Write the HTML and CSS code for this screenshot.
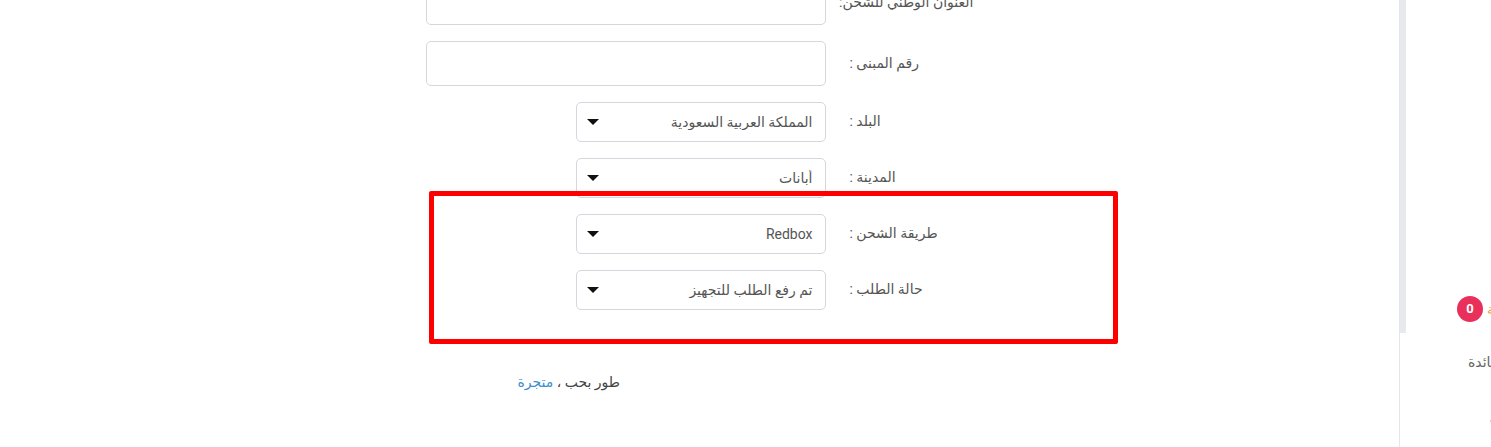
FILE: index.html
```html
<!DOCTYPE html>
<html lang="ar" dir="rtl">
<head>
  <meta charset="UTF-8">
  <title>تفاصيل الطلب</title>
  <link rel="stylesheet" href="styles.css">
</head>
<body>
  <aside class="sidebar">
    <div class="side-scroll"></div>
    <nav class="side-menu">
      <a class="side-item cart" href="#"><span class="badge">0</span><span class="side-text">السلة</span></a>
      <a class="side-item fav" href="#"><span class="side-text">الفائدة</span></a>
      <a class="side-item more" href="#"><span class="side-text">،</span></a>
    </nav>
  </aside>

  <main class="main">
    <form class="order-form">
      <div class="row">
        <label class="label">العنوان الوطني للشحن:</label>
        <input class="field field-wide" type="text">
      </div>
      <div class="row">
        <label class="label">رقم المبنى :</label>
        <input class="field field-wide" type="text">
      </div>
      <div class="row">
        <label class="label">البلد :</label>
        <div class="select-wrap">
          <select class="field">
            <option>المملكة العربية السعودية</option>
          </select>
        </div>
      </div>
      <div class="row">
        <label class="label">المدينة :</label>
        <div class="select-wrap">
          <select class="field">
            <option>أبانات</option>
          </select>
        </div>
      </div>
      <div class="row">
        <label class="label">طريقة الشحن :</label>
        <div class="select-wrap">
          <select class="field">
            <option>Redbox</option>
          </select>
        </div>
      </div>
      <div class="row">
        <label class="label">حالة الطلب :</label>
        <div class="select-wrap">
          <select class="field">
            <option>تم رفع الطلب للتجهيز</option>
          </select>
        </div>
      </div>

      <div class="highlight"></div>
    </form>

    <footer class="footer">طور بحب ، <a href="#">متجرة</a></footer>
  </main>
</body>
</html>
```

FILE: styles.css
```css
body {
  margin: 0;
  display: flex;
  font-family: Roboto, "DejaVu Sans", sans-serif;
  color: #555;
  background: #fff;
  overflow: hidden;
}
.main {
  flex: 1;
}
.order-form {
  position: relative;
  width: 548px;
  margin: -20px auto 0;
}
.row {
  display: flex;
  align-items: center;
  gap: 24px;
  margin-bottom: 16px;
}
.label {
  width: 124px;
  text-align: left;
  font-size: 14px;
  line-height: 16px;
  margin-top: -2px;
  color: #555;
  white-space: nowrap;
}
.field {
  box-sizing: border-box;
  height: 40px;
  width: 250px;
  border: 1px solid #d6d6de;
  border-radius: 5px;
  background: #fff;
  font-family: inherit;
  font-size: 14px;
  color: #555;
  padding: 0 12px;
}
.field-wide {
  width: 400px;
  height: 45px;
}
select.field {
  appearance: none;
  -webkit-appearance: none;
}
.select-wrap {
  position: relative;
}
.select-wrap::after {
  content: "";
  position: absolute;
  left: 11px;
  top: 17px;
  border-top: 6px solid #111;
  border-left: 6px solid transparent;
  border-right: 6px solid transparent;
  pointer-events: none;
}
.highlight {
  position: absolute;
  left: 3px;
  top: 211px;
  width: 689px;
  height: 153px;
  box-sizing: border-box;
  border: 5px solid #ff0000;
  border-radius: 2px;
}
.footer {
  margin-top: 62px;
  padding-right: 779px;
  line-height: 20px;
  font-size: 14px;
  color: #444;
}
.footer a {
  color: #3d8fcc;
  text-decoration: none;
}

/* sidebar */
.sidebar {
  width: 91px;
  height: 447px;
  border-left: 1px solid #e6e6e8;
  display: flex;
  direction: ltr;
  overflow: hidden;
}
.side-scroll {
  width: 6px;
  height: 333px;
  background: #e8e9ed;
  flex: none;
}
.side-menu {
  flex: 1;
  padding-top: 296px;
}
.side-item {
  display: flex;
  align-items: center;
  gap: 4px;
  height: 26px;
  white-space: nowrap;
  text-decoration: none;
  font-size: 14px;
  color: #666;
}
.side-text {
  direction: rtl;
}
.cart {
  padding-left: 51px;
}
.cart .side-text {
  color: #e4a23a;
}
.fav {
  margin-top: 27px;
  padding-left: 62px;
}
.more {
  margin-top: 30px;
  padding-left: 83px;
  color: #bbb;
  font-size: 10px;
}
.badge {
  flex: none;
  width: 26px;
  height: 26px;
  border-radius: 50%;
  background: #e8305b;
  color: #fff;
  font-size: 13px;
  font-weight: bold;
  line-height: 26px;
  text-align: center;
}
```
